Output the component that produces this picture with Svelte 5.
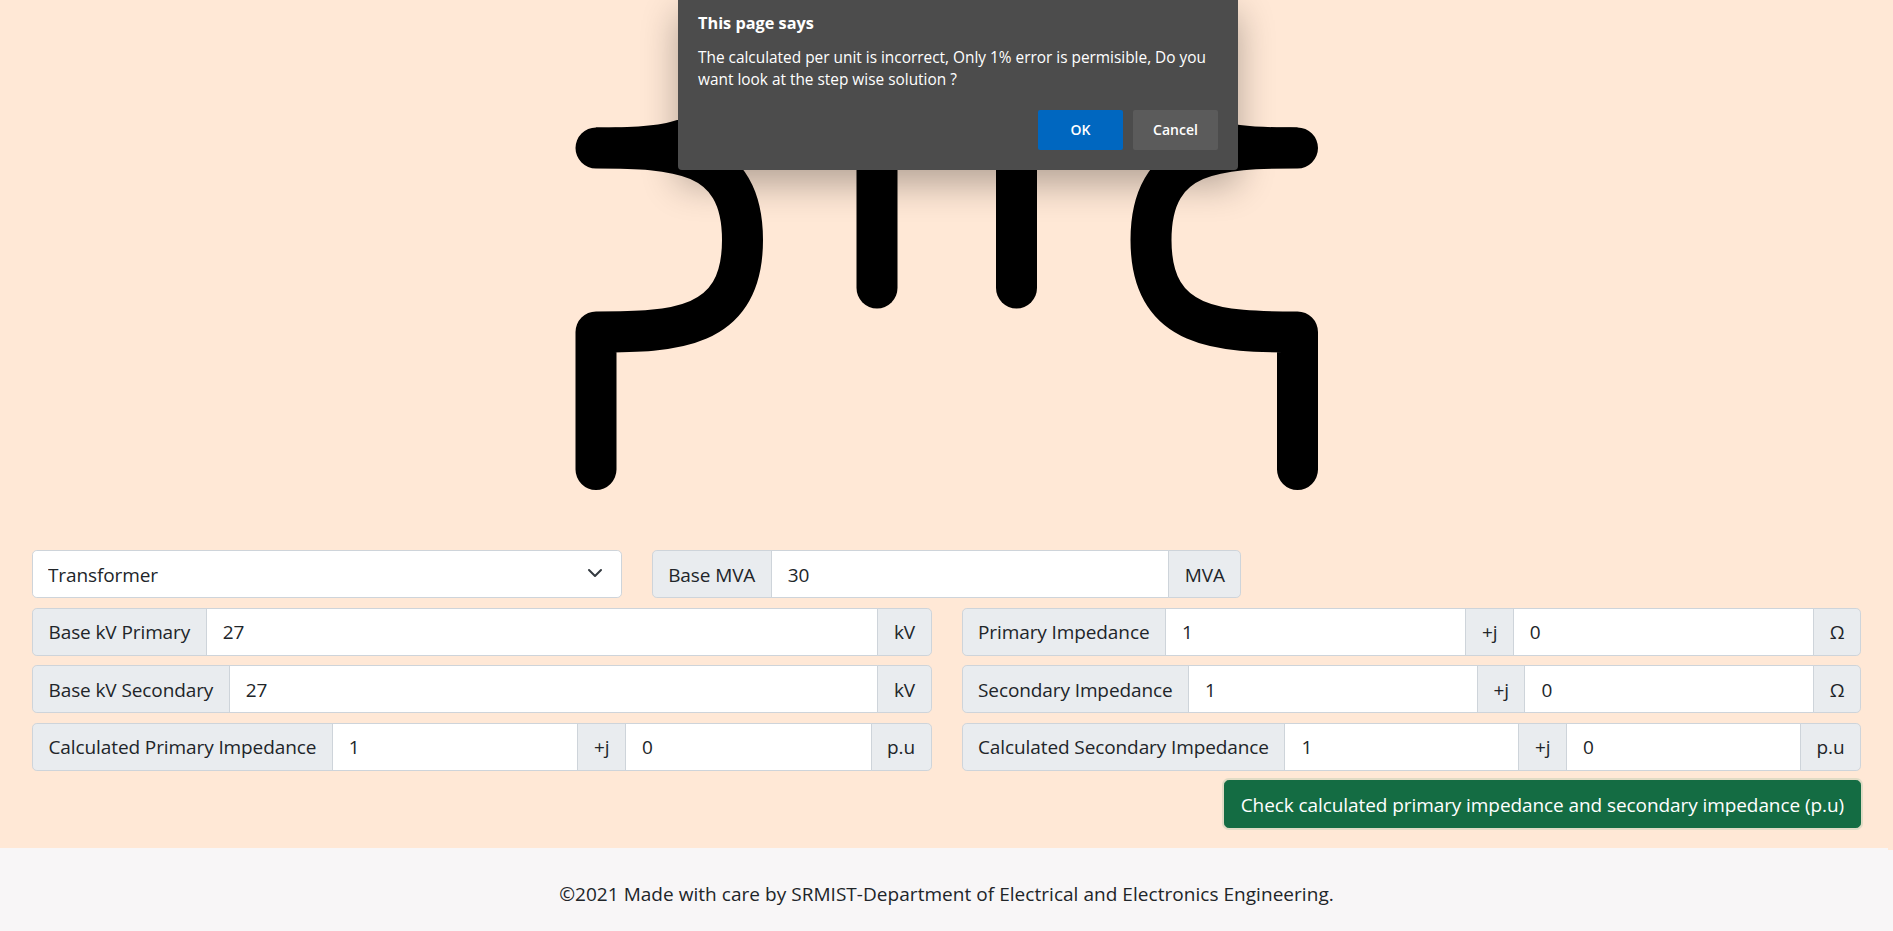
<script>
  const rows = [
    [
      { label: 'Base kV Primary', parts: ['27'], unit: 'kV' },
      { label: 'Primary Impedance', parts: ['1', '0'], unit: 'Ω' }
    ],
    [
      { label: 'Base kV Secondary', parts: ['27'], unit: 'kV' },
      { label: 'Secondary Impedance', parts: ['1', '0'], unit: 'Ω' }
    ],
    [
      { label: 'Calculated Primary Impedance', parts: ['1', '0'], unit: 'p.u' },
      { label: 'Calculated Secondary Impedance', parts: ['1', '0'], unit: 'p.u' }
    ]
  ];
</script>

<div class="page">
  <main class="content">
    <svg class="diagram" width="790" height="530" viewBox="0 0 790 530" aria-hidden="true">
      <path d="M44 127.5 C80 127.5 108 126 125 120 L160 120 L160 150 L44 150 Z" fill="#000" />
      <path d="M745.5 127.5 C709.5 127.5 681.5 126 664.5 120 L629.5 120 L629.5 150 L745.5 150 Z" fill="#000" />
      <g fill="none" stroke="#000" stroke-width="41" stroke-linecap="round" stroke-linejoin="round">
        <path d="M44 148 C122 148 190.5 150 190.5 240 C190.5 330 122 332 44 332 L44 469.5" />
        <path d="M745.5 148 C667.5 148 599 150 599 240 C599 330 667.5 332 745.5 332 L745.5 469.5" />
        <path d="M325 100 L325 288" />
        <path d="M464.5 100 L464.5 288" />
      </g>
    </svg>

    <section class="form">
      <div class="row">
        <div class="col third">
          <div class="select-wrap">
            <select class="select">
              <option>Transformer</option>
            </select>
            <svg class="chev" viewBox="0 0 16 16" width="16" height="16" aria-hidden="true">
              <path d="M2 5l6 6 6-6" fill="none" stroke="#343a40" stroke-width="2" stroke-linecap="round" stroke-linejoin="round" />
            </svg>
          </div>
        </div>
        <div class="col third">
          <div class="group">
            <span class="addon">Base MVA</span>
            <input class="field" value="30" />
            <span class="addon">MVA</span>
          </div>
        </div>
      </div>

      {#each rows as row}
        <div class="row">
          {#each row as g}
            <div class="col half">
              <div class="group">
                <span class="addon">{g.label}</span>
                <input class="field" value={g.parts[0]} />
                {#if g.parts.length > 1}
                  <span class="addon">+j</span>
                  <input class="field" value={g.parts[1]} />
                {/if}
                <span class="addon">{g.unit}</span>
              </div>
            </div>
          {/each}
        </div>
      {/each}

      <div class="actions">
        <button class="check">Check calculated primary impedance and secondary impedance (p.u)</button>
      </div>
    </section>
  </main>

  <footer class="footer">©2021 Made with care by SRMIST-Department of Electrical and Electronics Engineering.</footer>

  <div class="dialog" role="alertdialog">
    <div class="d-title">This page says</div>
    <p class="d-text">The calculated per unit is incorrect, Only 1% error is permisible, Do you want look at the step wise solution ?</p>
    <div class="d-actions">
      <button class="d-btn ok">OK</button>
      <button class="d-btn cancel">Cancel</button>
    </div>
  </div>
</div>

<style>
  :global(body) {
    margin: 0;
    background: #ffe8d6;
    font-family: "Open Sans", "Noto Sans", sans-serif;
    color: #212529;
  }
  .page {
    position: relative;
    height: 931px;
    overflow: hidden;
    display: flex;
    flex-direction: column;
  }
  .content {
    flex: 1;
    display: flex;
    flex-direction: column;
    min-height: 0;
  }
  .diagram {
    display: block;
    margin: 0 auto;
    flex: none;
  }
  .form {
    padding: 20px 32px 0;
    display: flex;
    flex-direction: column;
    gap: 9.5px;
  }
  .row {
    display: flex;
    gap: 30px;
  }
  .third { width: 589.67px; flex: none; }
  .half { flex: 1 1 0; min-width: 0; }
  .select-wrap { position: relative; }
  .select {
    appearance: none;
    display: block;
    width: 100%;
    height: 48px;
    box-sizing: border-box;
    padding: 1px 48px 0 15px;
    border: 1px solid #ced4da;
    border-radius: 4.8px;
    background: #fff;
    color: #212529;
    font: 19px "Open Sans", sans-serif;
    letter-spacing: -0.1px;
  }
  .chev {
    position: absolute;
    right: 19px;
    top: 15px;
    pointer-events: none;
  }
  .group {
    display: flex;
    height: 48px;
    box-sizing: border-box;
  }
  .addon, .field {
    box-sizing: border-box;
    height: 48px;
    border: 1px solid #ced4da;
    font: 19px "Open Sans", sans-serif;
    letter-spacing: -0.1px;
    color: #212529;
  }
  .addon {
    display: flex;
    align-items: center;
    flex: none;
    padding: 1px 15.5px 0;
    background: #e9ecef;
    white-space: nowrap;
  }
  .field {
    flex: 1 1 0;
    min-width: 0;
    width: 0;
    padding: 1px 16px 0;
    background: #fff;
    margin-left: -1px;
    outline: none;
  }
  .field + .addon { margin-left: -1px; }
  .addon:first-child {
    border-radius: 4.8px 0 0 4.8px;
  }
  .addon:last-child {
    border-radius: 0 4.8px 4.8px 0;
  }
  .actions {
    display: flex;
    justify-content: flex-end;
  }
  .check {
    height: 48px;
    padding: 1px 16px 0;
    border: 1px solid #146c43;
    border-radius: 4.8px;
    background: #146c43;
    color: #fff;
    font: 19px "Open Sans", sans-serif;
    letter-spacing: -0.08px;
    box-shadow: 0 0 0 2px rgba(60, 153, 110, 0.16);
  }
  .footer {
    flex: none;
    width: 1888px;
    height: 83px;
    box-sizing: border-box;
    padding-top: 33px;
    padding-left: 5px;
    background: #f8f6f7;
    text-align: center;
    font-size: 19px;
    letter-spacing: 0.04px;
    color: #212529;
    box-shadow: 5px 2px 0 #f8f6f7;
  }
  .dialog {
    position: absolute;
    left: 678px;
    top: 0;
    width: 560px;
    height: 170px;
    box-sizing: border-box;
    padding: 13px 20px 0;
    background: #4c4c4c;
    border-radius: 0 0 4px 4px;
    box-shadow: 0 14px 36px rgba(0, 0, 0, 0.3);
    color: #fff;
    font-size: 15.4px;
  }
  .d-title {
    font-weight: 700;
    font-size: 16.3px;
    line-height: 20px;
  }
  .d-text {
    margin: 14px 0 0;
    line-height: 22px;
  }
  .d-actions {
    position: absolute;
    right: 20px;
    bottom: 20px;
    display: flex;
    gap: 10px;
  }
  .d-btn {
    width: 85px;
    height: 40px;
    padding: 0 0 2px;
    border: 0;
    border-radius: 2px;
    color: #fff;
    font: 600 14px "Open Sans", sans-serif;
  }
  .ok { background: #0067c0; }
  .cancel { background: #5b5b5b; }
</style>
